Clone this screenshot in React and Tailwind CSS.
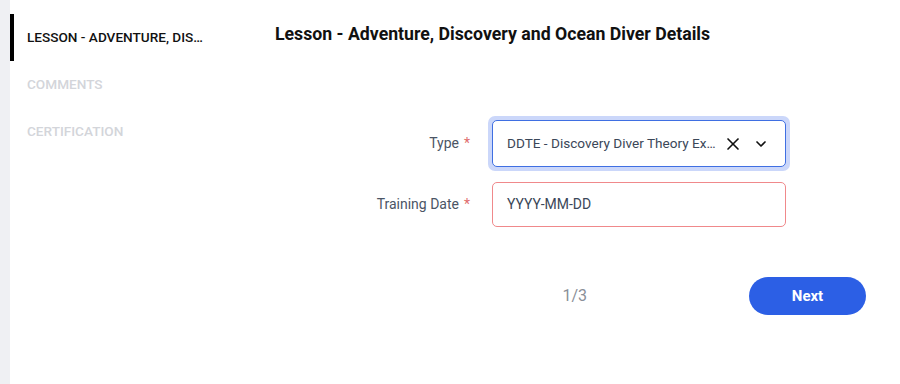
import { X, ChevronDown } from 'lucide-react'

const sections = [
  { label: 'LESSON - ADVENTURE, DISCOVERY AND OCEAN DIVER DETAILS', active: true },
  { label: 'COMMENTS', active: false },
  { label: 'CERTIFICATION', active: false },
]

function Label({ children }) {
  return (
    <div className="flex items-center text-[14px] text-[#4b5565]">
      {children}
      <span className="ml-[5px] text-[#e06c6c]">*</span>
    </div>
  )
}

export default function App() {
  return (
    <div className="flex w-[900px] h-[384px] bg-white font-['Roboto',sans-serif] overflow-hidden">
      {/* rail */}
      <div className="w-[10px] bg-[#eff0f3] flex-shrink-0" />

      {/* sections */}
      <div className="w-[245px] flex-shrink-0 pt-[14px]">
        {sections.map(s => (
          <div key={s.label} className="flex items-center h-[47px]">
            <div className={`w-[4px] h-full ${s.active ? 'bg-black' : ''}`} />
            <div
              className={`ml-[13px] w-[182px] truncate text-[13.6px] font-medium ${
                s.active ? 'text-[#111]' : 'text-[#d3d5da]'
              }`}
            >
              {s.label}
            </div>
          </div>
        ))}
      </div>

      {/* contenu */}
      <div className="flex-1 pl-[20px] pt-[23px]">
        <h1 className="text-[17.7px] leading-[22px] font-bold text-[#111]">
          Lesson - Adventure, Discovery and Ocean Diver Details
        </h1>

        <div className="mt-[71px] flex flex-col items-end pr-[110px]">
          <div className="flex items-center">
            <Label>Type</Label>
            <div className="ml-[18px] rounded-[7px] p-[4px] bg-[#cbd7fa]">
              <div className="w-[294px] h-[47px] flex items-center rounded-[5px] border border-[#3f6fe2] bg-white pl-[14px] pr-[16px]">
                <span className="flex-1 truncate text-[13.6px] text-[#3b4758]">
                  DDTE - Discovery Diver Theory Exam
                </span>
                <X className="ml-[7px] w-[20px] h-[20px] text-[#111]" strokeWidth={2} />
                <ChevronDown className="ml-[10px] w-[16px] h-[16px] text-[#111]" strokeWidth={2.5} />
              </div>
            </div>
          </div>

          <div className="flex items-center mt-[11px] mr-[4px]">
            <Label>Training Date</Label>
            <div className="ml-[22px] w-[294px] h-[45px] flex items-center rounded-[5px] border border-[#f0898b] bg-white pl-[14px] text-[14px] text-[#3b4758]">
              YYYY-MM-DD
            </div>
          </div>
        </div>

        <div className="mt-[50px] flex items-center justify-end pr-[34px]">
          <span className="text-[16px] text-[#8a8f98]">1/3</span>
          <button className="ml-[162px] w-[117px] h-[38px] rounded-full bg-[#2c5fe5] text-white text-[15px] font-bold">
            Next
          </button>
        </div>
      </div>
    </div>
  )
}
